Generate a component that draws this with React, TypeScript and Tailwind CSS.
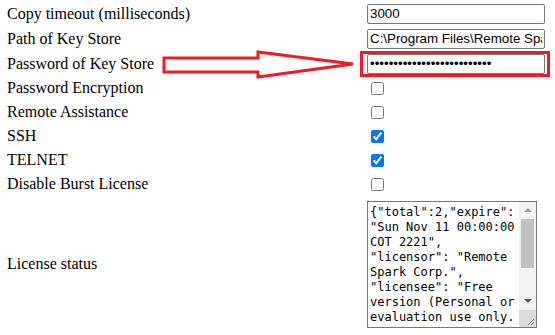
// only the lines that show in the box (the rest is scrolled out of view)
const license = `{"total":2,"expire":
"Sun Nov 11 00:00:00
COT 2221",
"licensor": "Remote
Spark Corp.",
"licensee": "Free
version (Personal or
evaluation use only.`;

type Row =
  | { label: string; kind: "text"; value: string }
  | { label: string; kind: "password"; value: string }
  | { label: string; kind: "check"; checked: boolean };

const rows: Row[] = [
  { label: "Copy timeout (milliseconds)", kind: "text", value: "3000" },
  { label: "Path of Key Store", kind: "text", value: "C:\\Program Files\\Remote Spark\\SparkGateway\\keystore" },
  { label: "Password of Key Store", kind: "password", value: "abcdefghijklmnopqrstuvwxyz" },
  { label: "Password Encryption", kind: "check", checked: false },
  { label: "Remote Assistance", kind: "check", checked: false },
  { label: "SSH", kind: "check", checked: true },
  { label: "TELNET", kind: "check", checked: true },
  { label: "Disable Burst License", kind: "check", checked: false },
];

const inputCls =
  "box-border h-[20px] w-[178px] rounded-[2px] border border-[#767676] bg-white px-[2px] py-[1px] text-[13.33px] text-black outline-none [font-family:'Liberation_Sans',Arial,sans-serif]";

// textarea look-alike with a classic (Windows) scrollbar
function LicenseBox() {
  return (
    <div className="my-[3px] flex h-[127px] w-[170px] border border-[#767676] bg-white">
      <pre className="m-0 min-w-0 flex-1 overflow-hidden whitespace-pre px-[2px] pt-[3px] text-[12px] leading-[15px] text-black [font-family:'DejaVu_Sans_Mono',monospace]">
        {license}
      </pre>
      <div className="flex w-[17px] shrink-0 flex-col bg-[#f1f1f1]">
        <div className="flex h-[17px] items-center justify-center">
          <div className="h-0 w-0 border-x-[4px] border-b-[4px] border-x-transparent border-b-[#a3a3a3]" />
        </div>
        <div className="flex-1 px-[2px]">
          <div className="h-[49px] bg-[#c1c1c1]" />
        </div>
        <div className="flex h-[17px] items-center justify-center">
          <div className="h-0 w-0 border-x-[4px] border-t-[4px] border-x-transparent border-t-[#505050]" />
        </div>
        <div className="flex h-[17px] items-end justify-end bg-[#dcdcdc]">
          <svg width="17" height="17" viewBox="0 0 17 17">
            <path d="M15 9 L9 15 M15 12 L12 15" stroke="#808080" strokeWidth="1" />
          </svg>
        </div>
      </div>
    </div>
  );
}

export default function App() {
  return (
    <div className="relative h-[335px] w-[555px] overflow-hidden bg-white pt-[1px] pl-[7px] text-[16px] text-black [font-family:'Liberation_Serif','Times_New_Roman',serif]">
      {rows.map((r) => (
        <div key={r.label} className={`flex items-center ${r.kind === "check" ? "h-[24px]" : "h-[25px]"}`}>
          <div className="w-[360px] shrink-0">{r.label}</div>
          {r.kind === "check" ? (
            <input type="checkbox" defaultChecked={r.checked} className="m-0 ml-[4px] h-[13px] w-[13px]" />
          ) : (
            <input type={r.kind} defaultValue={r.value} className={inputCls} readOnly />
          )}
        </div>
      ))}
      <div className="flex h-[136px] items-center">
        <div className="w-[360px] shrink-0">License status</div>
        <LicenseBox />
      </div>

      {/* callout box + arrow */}
      <div className="pointer-events-none absolute left-[360px] top-[51px] h-[26px] w-[190px] border-[3px] border-[#ed1c24]" />
      <svg className="pointer-events-none absolute left-0 top-0" width="555" height="335">
        <path
          d="M164 58 L258 58 L258 52 L353 64 L258 77 L258 72 L164 72 Z"
          fill="none"
          stroke="#ed1c24"
          strokeWidth="3"
          strokeLinejoin="miter"
        />
      </svg>
    </div>
  );
}
